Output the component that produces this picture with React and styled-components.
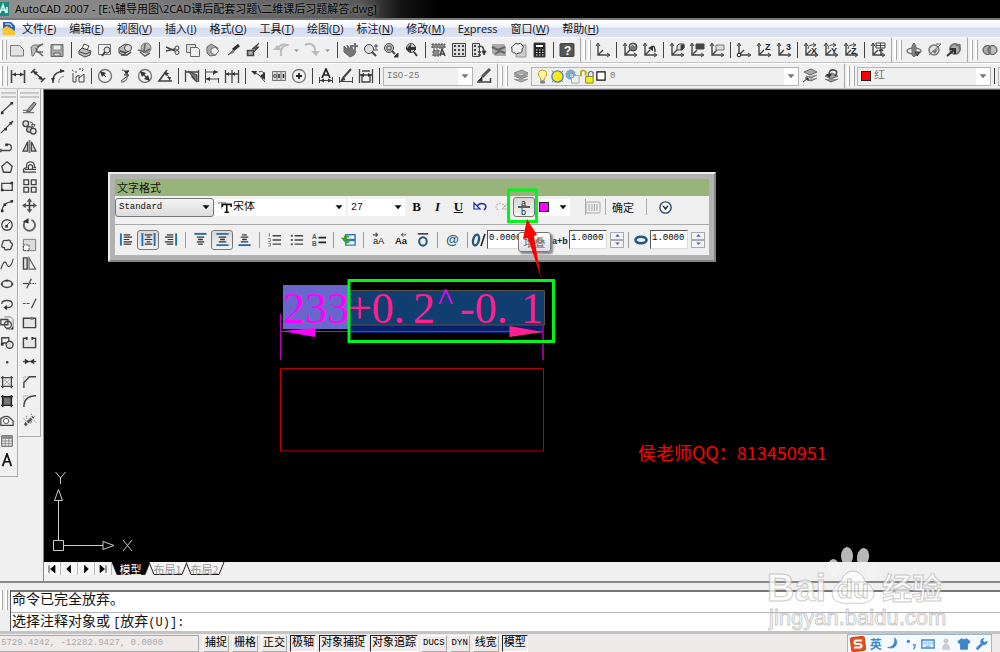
import React from 'react';
import styled, { createGlobalStyle, css } from 'styled-components';

const Global = createGlobalStyle`
  * { box-sizing: border-box; }
  html, body { margin: 0; padding: 0; }
  body { background: #f0f0f0; overflow: hidden; font-family: "Open Sans", "Noto Sans CJK SC", sans-serif; }
  button, input, select { font: inherit; color: inherit; margin: 0; }
  svg { display: block; flex: none; }
`;

const mono = '"Liberation Mono", "Noto Sans CJK SC", monospace';
const cjk = '"Noto Sans CJK SC", sans-serif';

/* ---------- icon drawings on a 16 unit grid ---------- */

const axes = <><path d="M3 2v11h11M3 13l5-5" strokeWidth="1.4" /><path d="M1 4l2-3 2 3M12 11l3 2-3 2" /></>;
const ink = { fill: '#333', stroke: 'none' };
const glyph = { fill: '#222', stroke: 'none', fontFamily: 'Liberation Sans, sans-serif', fontWeight: 700 };

const drawings = {
  newFile: <path d="M1.500 3.500h9l4 4v6.500h-13z" fill="#e2e2e2" stroke="#777" />,
  open: <><path d="M2 5l3-2h6l-2 3-5 8H3z" fill="#bbb" stroke="#777" /><path d="M8 5l6-3M8 9l6 5M7 6l1 4 6 0" strokeWidth="1.600" stroke="#666" /></>,
  save: <><path d="M2 2.500h12v12H2z" fill="#aaa" stroke="#666" /><path d="M4 3h8v5H4z" fill="#eee" stroke="#888" /><path d="M5 11h6v3H5z" fill="#ddd" stroke="#666" /></>,
  print: <><path d="M5 7l2-5 5 2-2 4" fill="#fff" /><path d="M2 9l3-3 9 3-1 4-5 2-6-3z" fill="#bbb" /><path d="M3 10l6 2 4-2" /></>,
  preview: <><path d="M1.500 2.500h12v10h-12z" fill="#eee" stroke="#777" /><circle cx="10" cy="8" r="3" fill="#ddd" /><path d="M8 10l-3 4" strokeWidth="2" /></>,
  publish: <><path d="M2 6l6-4 5 2-1 5-6 4-4-2z" fill="#bbb" /><circle cx="11" cy="6" r="3.500" fill="#ddd" /><path d="M3 9l6 2M4 13h6l4-3" strokeWidth="1.500" /></>,
  dwf: <><circle cx="9" cy="6" r="5" fill="#bbb" stroke="#777" /><path d="M1 8l7 2 5-3M3 10l5 4 5-3M8 2l-1 8" strokeWidth="1.600" stroke="#666" /></>,
  cut: <><path d="M1 5l9 4M1 9l9-2" strokeWidth="1.400" /><circle cx="12" cy="6" r="2" /><circle cx="12" cy="10.500" r="2" /></>,
  copy: <><path d="M1.500 2.500h9v8h-9z" fill="#ddd" stroke="#666" /><path d="M5.500 5.500h7l2 2v7h-9z" fill="#eee" stroke="#666" /></>,
  paste: <><path d="M2 5l4-3 7 4-2 7-6 1-3-3z" fill="#aaa" stroke="#666" /><path d="M6 7l4-2 4 4-4 4-4-2z" fill="#eee" stroke="#777" /></>,
  match: <><path d="M14 3L8 8" strokeWidth="3" stroke="#333" /><path d="M8 8l-5 5 6-3z" fill="#777" stroke="#777" /></>,
  blockEdit: <><path d="M2.500 8.500h6v5h-6z" fill="#aaa" strokeWidth="1.500" /><path d="M14 1L7 7h4l-3 4 6-6h-3z" fill="#555" /></>,
  undo: <><path d="M5 7c2-5 6-5 9-4-5 1-7 4-6 11" strokeWidth="2" stroke="#bbb" /><path d="M0 8h9L4 3z" fill="#bbb" stroke="none" /></>,
  redo: <><path d="M1 3c6-3 10 0 10 6" strokeWidth="2" stroke="#bbb" /><path d="M7 9h9l-4 5z" fill="#bbb" stroke="none" /></>,
  pan: <><path d="M1 4l4 4-1-5 3 4 1-4 2 5 3 1-2 4-4 2-6-5z" fill="#777" stroke="#666" /><path d="M12 1v7M9 4h6" stroke="#777" strokeWidth="2" /></>,
  zoomRt: <><circle cx="6" cy="7" r="4.500" fill="#ddd" /><path d="M9 10l4 4" strokeWidth="2" /><path d="M13 2v5M11 4h4M11 8h4" /></>,
  zoomWin: <><circle cx="6" cy="6" r="4.500" fill="#ccc" /><path d="M4 4h4v4H4z" /><path d="M9 9l3 3" strokeWidth="2" /><path d="M15 11v4h-4z" fill="#222" /></>,
  zoomPrev: <><circle cx="8" cy="6" r="4.500" fill="#ccc" /><path d="M11 10l3 4" strokeWidth="2" /><path d="M3 7l5-5v3h5v3H8v3z" fill="#333" stroke="none" /></>,
  props: <><path d="M1 2h13v4H1zM2 8h6v6H2z" fill="#888" stroke="#555" strokeDasharray="2 1" /><path d="M9 14l2-7 3 7M10 12h4" strokeWidth="1.500" /></>,
  center: <><path d="M1.500 1.500h13v13h-13z" fill="#ddd" /><path d="M4 3v10M8 3v10M12 3v10" stroke="#444" strokeWidth="2" strokeDasharray="2 2" /></>,
  palettes: <><path d="M1.500 1.500h7v13h-7z" fill="#ddd" /><path d="M4 3v10" strokeWidth="2" strokeDasharray="2 2" /><path d="M7 5c4-2 6 0 6 6M7 10h3M7 13h3" strokeWidth="1.500" /><path d="M11 9h4l-2 4z" fill="#222" /></>,
  sheet: <><path d="M1 2h12l2 3v9H4L1 11z" fill="#aaa" stroke="none" /><path d="M1 5l6 3 7-3M4 12l5-3 5 2" stroke="#666" strokeWidth="2" /></>,
  markup: <><path d="M11 3h4v12H5v-3" fill="#ccc" stroke="#999" /><path d="M3 3q2-3 4-1 3-2 4 1 3 2 0 4 1 4-3 4-3 2-4 0-4 0-3-4-2-2 2-4z" fill="#eee" /></>,
  calc: <><path d="M3 1h11v14H3z" fill="#222" /><path d="M5 3h7v2H5z" fill="#fff" stroke="none" /><path d="M5 8h8M5 10.500h8M5 13h8" stroke="#eee" strokeDasharray="1.500 1.500" /></>,
  help: <><rect x="1" y="1.500" width="14" height="13" rx="1" fill="#555" /><text x="5" y="13" fontSize="12" {...glyph} fill="#fff">?</text></>,
  ucs: axes,
  ucsWorld: <>{axes}<circle cx="11" cy="5" r="4" fill="#777" /><path d="M8 4q3-3 5 0" stroke="#ddd" /></>,
  ucsPrev: <>{axes}<path d="M8 6q5-5 5 4" strokeWidth="1.600" /><path d="M6 6l5 3V4z" {...ink} /></>,
  ucsFace: <>{axes}<path d="M8 4l2-2h5v4l-2 2H8z" fill="#ddd" /><path d="M12 3h3v3l-3 2z" fill="#333" /></>,
  ucsObject: <>{axes}<path d="M7 2h8v5H7z" fill="#444" /></>,
  ucsView: <>{axes}<path d="M7 3h8v5H7z" fill="#ddd" stroke="#777" /></>,
  ucsOrigin: <>{axes}<circle cx="3" cy="13" r="1.800" fill="#fff" stroke="#111" /></>,
  ucsZ: <>{axes}<text x="9" y="8" fontSize="9" {...glyph}>Z</text></>,
  ucs3: <>{axes}<text x="10" y="8" fontSize="9" {...glyph}>3</text></>,
  rotX: <>{axes}<path d="M5 7q0-5 7-4M10 1l3 2-3 2" /><text x="8" y="12" fontSize="9" {...glyph}>X</text></>,
  rotY: <>{axes}<path d="M5 7q0-5 7-4M10 1l3 2-3 2" /><text x="8" y="12" fontSize="9" {...glyph}>Y</text></>,
  rotZ: <>{axes}<path d="M5 7q0-5 7-4M10 1l3 2-3 2" /><text x="8" y="12" fontSize="9" {...glyph}>Z</text></>,
  ucsApply: <>{axes}<path d="M6 1h9v5H6zM6 3.500h9M10.500 1v5" /><path d="M11 7v7M9 9l2-2 2 2" strokeWidth="1.500" /></>,
  orbit: <><ellipse cx="8" cy="9" rx="7" ry="3" stroke="#777" strokeWidth="1.500" /><path d="M8 1v13M6 4l2-3 2 3v9l-2 2-2-2z" fill="#999" stroke="#666" /><path d="M9 10h5l-3 4z" fill="#555" /></>,
  freeOrbit: <><circle cx="8" cy="8" r="5" stroke="#777" strokeWidth="1.500" fill="#ddd" /><path d="M3 13l10-9 2-2-5 0" stroke="#666" /><path d="M6 9l6-2-3 5z" fill="#777" stroke="none" /></>,
  contOrbit: <><circle cx="9" cy="7" r="5" fill="#aaa" stroke="#777" strokeWidth="2" /><path d="M1 14l7-6M4 7h5v5" stroke="#333" strokeWidth="2" /><path d="M10 4l4-2v5" stroke="#666" /></>,
  union: <><circle cx="5.500" cy="8" r="4.500" fill="#aaa" /><circle cx="10.500" cy="8" r="4.500" fill="#bbb" /><path d="M8 4.500v7" /></>,
  dimLinear: <><path d="M1.500 2v13M14.500 2v13" strokeWidth="1.600" /><path d="M2 6.500h12" /><path d="M2 6.500l4-2v4zM14 6.500l-4-2v4z" {...ink} /></>,
  dimAligned: <><path d="M1 5l4-4M11 14l4-4M3 3l10 9" strokeWidth="1.600" /><path d="M3 3l5 1-3 3zM13 12l-5-1 3-3z" {...ink} /></>,
  dimArc: <><path d="M3 15Q2 4 14 3" strokeWidth="1.600" /><path d="M9 15q-1-5 5-7" stroke="#888" /><path d="M10 1l5 2-5 2zM1 10l4 0-2 4z" {...ink} /></>,
  dimOrd: <><path d="M3 5v9h3V9l3-2v7h5V6l-5 4" /><path d="M2 2l2 2M9 1h4M12 3l2-2M6 3v3" strokeDasharray="2 1" /></>,
  dimRadius: <><circle cx="8" cy="8" r="6.500" stroke="#777" strokeWidth="1.400" /><path d="M5 5l4 4" /><path d="M3 3l6 2-4 4z" {...ink} /></>,
  dimJog: <><path d="M5 2a6 6 0 1 1-1 12" stroke="#888" strokeWidth="1.400" /><path d="M12 3L7 7h5l-8 6" /><path d="M12 2l-5 1 3 4z" {...ink} /></>,
  dimDia: <><circle cx="8" cy="8" r="6.500" stroke="#777" strokeWidth="1.400" /><path d="M4 4l8 8" strokeWidth="1.500" /><path d="M3 3l6 2-4 4zM13 13l-6-2 4-4z" {...ink} /></>,
  dimAng: <><path d="M10 2L2 13h13" strokeWidth="1.600" /><path d="M8 5q5 3 5 8" /><path d="M7 4l5 1-3 3zM13 12l-3-3h4z" {...ink} /></>,
  dimQuick: <><path d="M1.500 2v12M14.500 2v12M2 4h12M8 4v5l5 5" strokeWidth="1.300" /><path d="M4 3l9 11V7z" fill="#777" /></>,
  dimBase: <><path d="M1.500 1v14M9.500 3v4M14.500 10v5M2 4h12M2 11h12" /><path d="M14 4l-4-2v4zM2 11l4-2v4z" {...ink} /></>,
  dimCont: <><path d="M1.500 2v13M8 2v13M14.500 2v13M2 6h12" strokeWidth="1.300" /><path d="M2 6l3-2v4zM8 6l3-2v4z" {...ink} /></>,
  leader: <><path d="M1 3l7 4 6 7M8 4q3-2 5 1t-2 6" /><path d="M0 3l6 0-2 4zM9 8l5-4v8z" {...ink} /></>,
  tolerance: <><path d="M1.500 3.500h13v9h-13zM6 4v8M10 4v8" fill="#ddd" stroke="#777" /><circle cx="4" cy="8" r="1.500" /><path d="M8 6v4M12.500 6v4" stroke="#222" strokeWidth="1.500" /></>,
  centerMark: <><circle cx="8" cy="8" r="6.500" stroke="#777" strokeWidth="1.300" /><path d="M8 5v6M5 8h6" stroke="#222" strokeWidth="1.800" /></>,
  dimEdit: <><path d="M4 10l4-9 4 9M5.500 7h5" strokeWidth="1.700" stroke="#222" /><path d="M1.500 9v6M14.500 9v6M2 12.500h12" /><path d="M2 12.500l4-2v4zM14 12.500l-4-2v4z" {...ink} /></>,
  dimTextEdit: <><path d="M5 10l8-9M5 10l-1 2 3-1" strokeWidth="2" /><path d="M1.500 9v6M14.500 9v6M2 13.500h12" /></>,
  dimUpdate: <><path d="M1.500 1v14M14.500 1v14M4 3h8M2 7h12M4 8v6h8V8" strokeWidth="1.300" /><path d="M2 7l4-2v4zM14 7l-4-2v4z" {...ink} /></>,
  dimStyle: <><path d="M14 1L6 9" strokeWidth="3" stroke="#555" /><path d="M6 9l-4 4h4z" fill="#222" /><path d="M1 14h14M14.500 10v5" strokeWidth="1.500" /></>,
  layers: <path d="M1 5l8-3 6 3-7 3zM1 8l7 3 7-3M1 11l7 3 7-3M1 6.500l7 3 7-3" fill="#aaa" stroke="#888" />,
  layerPrev: <><path d="M2 4l7-3 6 3-7 3zM4 8l5 2 6-3M4 11l5 2 6-3" fill="#aaa" stroke="#666" /><path d="M1 14l5-4M3 10h3v3" stroke="#222" /></>,
  layerState: <><path d="M2 8l7-3 6 3-7 3zM2 11l6 3 7-3" fill="#999" stroke="#666" /><path d="M6 7q0-6 5-5t1 6" strokeWidth="1.600" /><path d="M3 6h6l-3 4z" {...ink} /></>,
  bulb: <><path d="M8 1a4.500 4.500 0 0 0-2 8.500V12h4V9.500A4.500 4.500 0 0 0 8 1z" fill="#fff6a0" stroke="#b09a20" /><path d="M6 13h4v2H6z" fill="#77a" stroke="#77a" /></>,
  sun: <><path d="M2 2l12 12M14 2L2 14" stroke="#48a" /><circle cx="8" cy="8" r="6" fill="#ffe818" stroke="#48a" strokeWidth="1.400" /></>,
  sunVp: <><circle cx="6" cy="6" r="5" fill="#8ac" stroke="#59b" strokeDasharray="2 1" /><path d="M7 7h8v8H7z" fill="#eee" stroke="#9ab" /><circle cx="7" cy="7" r="2.500" fill="#bcd" stroke="#69b" /></>,
  lock: <><path d="M1 8V3q2-3 5 0v4" strokeWidth="2" stroke="#b8b010" /><path d="M6 8h8v7H6z" fill="#f4f020" stroke="#8a8410" /><path d="M9 8V4q3-3 5 0v4" stroke="#777" strokeWidth="1.500" /></>,
  square: <path d="M2.500 2.500h11v11h-11z" fill="#fff" stroke="#111" strokeWidth="1.600" />,
  line: <><path d="M2 13L14 2" strokeWidth="1.500" /><path d="M1 12h3v3H1zM12 1h3v3h-3z" {...ink} /></>,
  xline: <><path d="M1 15L15 1" strokeWidth="1.500" /><path d="M15 1l-5 2 3 3zM5 9h3v3H5z" {...ink} /></>,
  pline: <><path d="M1 12h10a4 4 0 0 0 0-7H8M1 10v4" strokeWidth="1.500" /><path d="M6 4h3v3H6z" {...ink} /></>,
  polygon: <path d="M8 2l6 5-2 7H4L2 7z" fill="#eee" strokeWidth="1.500" />,
  rect: <><path d="M2 5h12v8H2z" fill="#eee" strokeWidth="1.500" /><path d="M12 3h3v3h-3zM1 11h3v3H1z" {...ink} /></>,
  arc: <><path d="M2 14Q3 4 14 3" strokeWidth="1.500" /><path d="M1 12h3v3H1zM4 5h3v3H4zM12 1h3v3h-3z" {...ink} /></>,
  circle: <><circle cx="8" cy="8" r="6" fill="#eee" strokeWidth="1.500" /><path d="M7 9l5-5" /><path d="M6 8h3v3H6z" {...ink} /></>,
  cloud: <path d="M3 6q0-4 4-3 5-2 5 2 4 2 1 5 0 4-4 3-4 2-4-2-5 0-2-5z" fill="#eee" strokeWidth="1.500" />,
  spline: <path d="M1 14C5 1 7 6 8 9s5 3 7-7" strokeWidth="1.300" />,
  ellipse: <><ellipse cx="8" cy="8" rx="6" ry="4" fill="#eee" strokeWidth="1.700" /><path d="M7 3h2v2H7zM1 7h2v2H1zM13 7h2v2h-2z" {...ink} /></>,
  ellipseArc: <><path d="M2 8q0-4 6-4t6 4-6 4" strokeWidth="1.500" /><path d="M8 9v6l-4-3z" {...ink} /></>,
  insert: <><path d="M5 1h7l3 3v11H7" fill="#eee" stroke="#777" /><path d="M1 4h8v6H1z" strokeWidth="1.500" /><circle cx="9" cy="10" r="4" strokeWidth="1.500" /><path d="M15 12v3h-3z" {...ink} /></>,
  block: <><path d="M2 2h8v6H2z" strokeWidth="1.500" /><circle cx="11" cy="10" r="4" strokeWidth="1.500" fill="#ddd" /><path d="M1 8h3v3H1z" {...ink} /></>,
  point: <path d="M7 7h2.500v2.500H7z" {...ink} />,
  hatch: <><path d="M3 1v14M13 1v14M1 3h14M1 13h14" strokeWidth="1.500" /><path d="M4 8l4-4M4 12l8-8M8 12l4-4M4 4l8 8" stroke="#aaa" /></>,
  gradient: <><path d="M4 4h9v9H4z" fill="#777" /><path d="M3 1v14M13 1v14M1 3h14M1 13h14" strokeWidth="1.700" stroke="#222" /></>,
  region: <><path d="M1 13V5q6-4 10-1l4 4v5z" fill="#eee" strokeWidth="1.400" /><circle cx="7" cy="8" r="3" fill="#fff" /></>,
  table: <><path d="M2 2h12v12H2z" fill="#eee" /><path d="M2 4h12" strokeWidth="3" stroke="#888" /><path d="M2 8h12M2 11h12M6 4v10M10 4v10" stroke="#888" /></>,
  textA: <path d="M3 15L8 1l5 14M5 10h6" strokeWidth="1.900" stroke="#111" />,
  erase: <><path d="M6 10l7-8 2 2-6 8-4 1z" fill="#999" /><path d="M1 11h5M1 13.500h12" strokeWidth="1.400" stroke="#777" /></>,
  copyObj: <><circle cx="4" cy="4" r="3" fill="#ddd" strokeWidth="1.400" /><circle cx="8" cy="10" r="3" fill="#ccc" strokeWidth="1.400" /><circle cx="12" cy="12" r="3" fill="#eee" strokeWidth="1.400" /><path d="M8 2q4 0 4 3M10 5h4l-2 3z" /></>,
  mirror: <><path d="M6 3v10H1zM10 3v10h5z" fill="#ccc" strokeWidth="1.300" /><path d="M8 1v14" stroke="#777" strokeWidth="2" /></>,
  offset: <path d="M1 14h14M3 11h12M3 14q-4-3 2-5-1-6 4-6t4 6h2M7 11q-1-5 2-5t2 5" strokeWidth="1.300" />,
  array: <path d="M2 2h5v5H2zM10 2h5v5h-5zM2 10h5v5H2zM10 10h5v5h-5z" fill="#eee" strokeWidth="1.400" />,
  move: <><path d="M8 2v12M2 8h12" strokeWidth="1.800" /><path d="M8 0l3 4H5zM8 16l3-4H5zM0 8l4-3v6zM16 8l-4-3v6z" fill="#555" stroke="none" /></>,
  rotate: <><path d="M10 3a6 6 0 1 1-6 1" strokeWidth="2" stroke="#666" /><path d="M1 5l6-4v6z" {...ink} /></>,
  scale: <><path d="M1.500 2.500h13v12h-13z" fill="#ddd" stroke="#777" /><path d="M1.500 8.500h6v6h-6z" fill="#fff" stroke="#333" strokeDasharray="2 1" /></>,
  stretch: <><path d="M1.500 2h4v12h-4z" strokeWidth="1.400" fill="#ddd" /><path d="M7.500 2v12h7z" stroke="#666" strokeWidth="1.300" /></>,
  trim: <><path d="M1 8h6" strokeWidth="1.300" /><path d="M8 8h7" strokeDasharray="2 1" /><path d="M5 13l5-10" strokeWidth="1.300" /></>,
  extend: <><path d="M1 8h8" strokeDasharray="3 1" /><path d="M10 13l5-10" strokeWidth="1.300" /></>,
  breakPt: <><path d="M1.500 3.500h13v10h-13z" fill="#e6e6e6" strokeWidth="1.500" /><path d="M9 2h3v3H9z" fill="#777" stroke="none" /></>,
  breakObj: <><path d="M5 3.500H1.500v10h13v-10H11" fill="#e6e6e6" strokeWidth="1.500" /><path d="M4 2h2v3H4zM10 2h2v3h-2z" {...ink} /></>,
  join: <><path d="M1 8h14" strokeWidth="1.300" /><path d="M8 8L3 5v6zM8 8l5-3v6z" {...ink} /></>,
  chamfer: <><path d="M2 15V9l6-6h7" strokeWidth="1.500" /><path d="M2 8V3h5" stroke="#777" strokeDasharray="1 1" /></>,
  fillet: <><path d="M2 15Q2 3 15 3" strokeWidth="1.600" /><path d="M2 8V3h5" stroke="#777" strokeDasharray="1 1" /></>,
  explode: <><path d="M3 13l4-4 3 1M8 8l4-4" strokeWidth="3" stroke="#555" strokeDasharray="3 1" /><path d="M2 6l2 2M10 1v2M14 3l-2 2M13 8l2 2M5 3v3M3 10h2" strokeDasharray="1 1" /></>,
};

const blue = '#286ea6';
Object.assign(drawings, {
  alLeft: <><path d="M2 1.500v13" stroke={blue} strokeWidth="2" /><path d="M5 3h7M5 5.500h9M5 8h6M5 10.500h9M5 13h8" stroke="#333" strokeWidth="1.300" /></>,
  alCenter: <><path d="M1.500 1v14M14.500 1v14" stroke={blue} strokeWidth="2" /><path d="M4 3h8M6 5.500h4M4 8h8M6 10.500h4M4 13h8" stroke="#333" strokeWidth="1.300" /></>,
  alRight: <><path d="M14 1.500v13" stroke={blue} strokeWidth="2" /><path d="M4 3h7M2 5.500h9M5 8h6M2 10.500h9M4 13h7" stroke="#333" strokeWidth="1.300" /></>,
  top: <><path d="M1.500 2h13" stroke={blue} strokeWidth="2" /><path d="M4 5.500h8M5.500 8h5M4 10.500h8M5.500 13h5" stroke="#333" strokeWidth="1.400" /></>,
  middle: <><path d="M1.500 2h13M1.500 14h13" stroke={blue} strokeWidth="2" /><path d="M4 5.500h8M5.500 8h5M4 10.500h8" stroke="#333" strokeWidth="1.400" /></>,
  bottom: <><path d="M1.500 14h13" stroke={blue} strokeWidth="2" /><path d="M5.500 3h5M4 5.500h8M5.500 8h5M4 10.500h8" stroke="#333" strokeWidth="1.400" /></>,
  numbered: <><path d="M6 4h9M6 8.500h9M6 13h9" strokeWidth="1.400" /><path d="M2.500 1v4M1.500 7h2v3h-2M1.500 12h2v3h-2" stroke="#777" /></>,
  bullets: <><path d="M6 4h9M6 8.500h9M6 13h9" strokeWidth="1.400" /><path d="M2 3h2v2H2zM2 7.500h2v2H2zM2 12h2v2H2z" fill="#555" stroke="none" /></>,
  letters: <><path d="M8 6h8M8 11h8" strokeWidth="1.800" stroke="#222" /><text x="1" y="7" fontSize="7" {...glyph} fill="#555">A</text><text x="1" y="15" fontSize="7" {...glyph} fill="#555">B</text></>,
  field: <><path d="M5 3h10v5H5zM5 9h10v5H5z" fill="#fff" stroke="#2878b8" strokeWidth="1.500" /><path d="M9 5H4v4M5 11h3V8" stroke="#38a028" strokeWidth="1.800" /><path d="M0 6h7l-3 5z" fill="#38a028" stroke="none" /></>,
  upper: <><text x="2" y="13" fontSize="10" {...glyph} fontWeight="400">aA</text><path d="M2 3h5M5 1l2 2-2 2" strokeWidth="1.200" /></>,
  lower: <><text x="2" y="13" fontSize="10" {...glyph}>Aa</text><path d="M9 3h5M11 1L9 3l2 2" strokeWidth="1" /></>,
  overline: <><path d="M3 2h11" strokeWidth="1.600" stroke="#333" /><ellipse cx="8.500" cy="10" rx="4" ry="4.500" stroke="#24587a" strokeWidth="2.200" /></>,
  at: <text x="1" y="13" fontSize="14" {...glyph} fill="#24587a">@</text>,
  oblique: <><ellipse cx="5" cy="8" rx="2.800" ry="5.500" stroke="#24587a" strokeWidth="2.400" transform="rotate(14 5 8)" /><path d="M14 2l-4 12" strokeWidth="1.600" stroke="#222" /></>,
  tracking: <text x="0" y="12" fontSize="9" {...glyph}>a+b</text>,
  widthF: <ellipse cx="8" cy="8" rx="5.500" ry="3.200" stroke="#24587a" strokeWidth="2.600" />,
  ruler: <><rect x="1" y="3" width="14" height="11" rx="1" stroke="#aaa" fill="#eee" /><path d="M4 5v7M7 5v7M9.500 5v7M12 5v7" stroke="#aaa" /></>,
  undoBlue: <><path d="M4 8q4-5 8-3t0 6" stroke="#1c28a0" strokeWidth="1.500" /><path d="M2 4v6h6z" fill="#fff" stroke="#1c28a0" strokeWidth="1.200" /></>,
  redoGray: <><path d="M12 8Q8 3 4 5t0 6" stroke="#bbb" strokeWidth="1.300" strokeDasharray="2 1" /><path d="M14 4v6H8z" stroke="#bbb" /></>,
  options: <><circle cx="8" cy="8" r="6" stroke="#24487a" strokeWidth="1.500" fill="#fff" /><path d="M4.500 6h7L8 11z" fill="#222" stroke="none" /><path d="M6 6h4l-2 2z" fill="#fff" stroke="none" /></>,
  ttf: <><path d="M1 3h8M1 2v3M9 2v2M4 3v7" stroke="#888" /><path d="M5 5h10M5 4v4M15 4v4M10 5v9M7.500 14h5" stroke="#111" strokeWidth="1.800" /></>,
  fraction: <><path d="M2 8h12" stroke="#111" strokeWidth="1.300" /><text x="5" y="6.500" fontSize="9" {...glyph} fontWeight="400">a</text><text x="5" y="16" fontSize="9" {...glyph} fontWeight="400">b</text></>,
  moon: <path d="M10 1c5 5 1 14-8 11 5 0 9-4 8-11z" fill="#3f86cf" stroke="#3f86cf" />,
  comma: <><circle cx="5" cy="5" r="1.800" fill="#3f86cf" stroke="none" /><path d="M10 9h2.500v2l-1.500 3" stroke="#3f86cf" strokeWidth="1.600" /></>,
  keyboard: <><path d="M1 3.500h14v9H1z" fill="#fff" stroke="#3f86cf" strokeWidth="1.600" /><path d="M3 6h11M3 8h11" stroke="#3f86cf" strokeDasharray="1.500 1" /><path d="M5 10.500h6" stroke="#3f86cf" /></>,
  person: <path d="M8 2a2.500 2.500 0 1 1 0 5 2.500 2.500 0 1 1 0-5zM4 14q0-6 4-6t4 6z" fill="#ccc" stroke="#ccc" />,
  shirt: <path d="M5 2q3 2 6 0l4 3-2 3-1-1v7H4V7L3 8 1 5z" fill="#3f86cf" stroke="#3f86cf" />,
  wrench: <><path d="M2 14l6-6" stroke="#3f86cf" strokeWidth="3" /><path d="M14 4l-3 2-2-2 2-3q-5 0-5 5 2 4 5 3 4-1 3-5z" fill="#3f86cf" stroke="none" /></>,
  sogou: <><rect x="1" y="1" width="14" height="14" rx="2" fill="#e8501c" stroke="#c83c10" transform="rotate(-6 8 8)" /><path d="M12 4.500H6q-3 2 0 3.500h4q3 2 0 3.500H4" stroke="#fff" strokeWidth="2.200" /></>,
  caret: <path d="M4 6h8l-4 4.500z" fill="currentColor" stroke="none" />,
  first: <path d="M4 3v10M12 3L6 8l6 5z" fill="#000" stroke="#000" />,
  prev: <path d="M10 3L5 8l5 5z" fill="#000" stroke="#000" />,
  next: <path d="M6 3l5 5-5 5z" fill="#000" stroke="#000" />,
  last: <path d="M12 3v10M4 3l6 5-6 5z" fill="#000" stroke="#000" />,
});

const Icon = ({ name, size = 16 }) => (
  <svg width={size} height={size} viewBox="0 0 16 16" fill="none" stroke="#444" strokeWidth="1" aria-hidden="true">{drawings[name]}</svg>
);

/* ---------- frame ---------- */

const Shell = styled.div`
  height: 100vh;
  display: flex;
  flex-direction: column;
  overflow: hidden;
  position: relative;
`;
const TitleBar = styled.header`
  display: flex;
  align-items: center;
  gap: 5px;
  height: 18px;
  flex: none;
  overflow: hidden;
  background: linear-gradient(90deg, #8f8f8f 0, #858585 110px, #6a6a6a 230px, #585858 360px, #141414 400px, #000 440px);
`;
const TitleText = styled.h1`
  margin: 0;
  font: 400 11px/18px "Open Sans", ${cjk};
  color: #000;
  white-space: nowrap;
  text-shadow: 0 0 4px #aaa;
`;
const MenuBar = styled.nav`
  display: flex;
  align-items: center;
  gap: 13px;
  height: 19px;
  flex: none;
  border-top: 2px solid #777;
  background: linear-gradient(#fff 0, #f2f4fb 40%, #d5dcf0 50%, #dde3f4 100%);
`;
const MenuItem = styled.button`
  border: 0;
  padding: 0;
  background: none;
  font-size: 11px;
  line-height: 17px;
  color: #111;
  white-space: nowrap;
`;
const MenuIcon = styled.span`
  width: 9px;
  padding-left: 2px;
`;
const ToolbarLine = styled.div`
  display: flex;
  height: 26px;
  flex: none;
  background: #f0f0f0;
  border-bottom: 1px solid #c4c4c4;
  overflow: hidden;
`;
const Bar = styled.div`
  display: flex;
  align-items: center;
  flex: none;
  padding-right: 3px;
  border-right: 1px solid #a8a8a8;
  border-top: 1px solid #fff;
`;
const Grip = styled.span`
  flex: none;
  width: ${p => p.$w || 12}px;
  height: 20px;
  display: flex;
  justify-content: ${p => (p.$start ? 'flex-start' : 'center')};
  gap: 2px;
  &::before, &::after {
    content: "";
    width: 2px;
    background: #fff;
    border-right: 1px solid #aaa;
  }
`;
const Tool = styled.button`
  display: flex;
  align-items: center;
  justify-content: center;
  flex: none;
  width: ${p => p.$w || 20}px;
  height: 20px;
  padding: 0;
  border: 0;
  background: none;
  color: #888;
`;
const Sep = styled.span`
  flex: none;
  width: ${p => p.$w || 7}px;
  margin-left: ${p => p.$before || 0}px;
  height: 16px;
  display: flex;
  justify-content: center;
  &::before { content: ""; width: 1px; background: ${p => p.$c || '#444'}; }
`;
const Combo = styled.label`
  display: flex;
  align-items: center;
  position: relative;
  flex: none;
  width: ${p => p.$w}px;
  height: 19px;
  padding: 0 3px;
  color: ${p => p.$c || '#777'};
  background: ${p => p.$bg || '#f0f0f0'};
  border: 1px solid ${p => p.$line || '#b4b4b4'};
  border-radius: ${p => p.$r || 0}px;
  > select {
    appearance: none;
    flex: 1;
    min-width: 0;
    border: 0;
    outline: 0;
    padding: 0 0 0 ${p => p.$pad || 0}px;
    background: none;
    font: ${p => p.$fs || 9}px ${mono};
  }
`;
const ComboArrow = styled.span`
  display: flex;
  align-items: center;
  align-self: stretch;
  margin-right: -3px;
  background: ${p => p.$bg || 'transparent'};
`;
const Swatch = styled.span`
  flex: none;
  width: 10px;
  height: 10px;
  border: 1px solid #222;
  background: ${p => p.$c};
`;

const Select = ({ label, value, arrowBg, children, ...rest }) => (
  <Combo {...rest}>
    {children}
    <select aria-label={label} defaultValue={value}><option>{value}</option></select>
    <ComboArrow $bg={arrowBg}><Icon name="caret" size={14} /></ComboArrow>
  </Combo>
);

const Tools = ({ list, sep = 7, w }) => list.map((n, i) => (
  n === '|' ? <Sep key={i} $w={sep} /> : n === 'v'
    ? <Tool key={i} $w={11} aria-label="more"><Icon name="caret" size={9} /></Tool>
    : <Tool key={i} $w={w} aria-label={n}><Icon name={n} /></Tool>
));

/* ---------- workspace ---------- */

const Workspace = styled.main`
  display: flex;
  flex: 1;
  min-height: 0;
`;
const Palettes = styled.aside`
  display: flex;
  align-items: flex-start;
  width: 44px;
  flex: none;
  background: #f0f0f0;
  border-right: 1px solid #888;
`;
const Palette = styled.div`
  display: flex;
  flex-direction: column;
  align-items: ${p => (p.$clip ? 'flex-start' : 'center')};
  width: ${p => (p.$clip ? 18 : 23)}px;
  height: ${p => p.$h}px;
  padding: 3px 0 6px;
  border-right: 1px solid #aaa;
  border-bottom: 1px solid #aaa;
  border-left: ${p => (p.$clip ? 0 : 1)}px solid #fff;
  overflow: hidden;
`;
const PaletteGrip = styled.span`
  align-self: stretch;
  height: 6px;
  margin: 0 1px;
  border-top: 2px solid #c8c8c8;
  border-bottom: 2px solid #c8c8c8;
`;
const PaletteTools = styled.div`
  flex: 1;
  min-height: 0;
  display: grid;
  grid-auto-rows: 1fr;
  width: ${p => (p.$clip ? 13 : 19)}px;
  button { width: 100%; height: auto; }
`;
const Drawing = styled.section`
  flex: 1;
  min-width: 0;
  display: flex;
  flex-direction: column;
`;
const Canvas = styled.div`
  position: relative;
  flex: 1;
  background: #000;
  border-top: 1px solid #666;
  overflow: hidden;
`;
const Layer = styled.svg`
  position: absolute;
  top: 0;
  left: 0;
  width: 100%;
  height: 100%;
  pointer-events: none;
`;
const UcsIcon = styled.svg`
  position: absolute;
  left: 4px;
  bottom: 6px;
`;
const Dialog = styled.div`
  position: absolute;
  left: 64px;
  top: 82px;
  width: 608px;
  height: 90px;
  padding: 5px;
  background: #b2b2b2;
  border: 2px solid #858585;
  border-top-color: #ececec;
  border-left-color: #ececec;
`;
const DialogBody = styled.div`
  height: 100%;
  display: flex;
  flex-direction: column;
  background: #f0f0f0;
  font-family: ${cjk};
`;
const DialogTitle = styled.h2`
  margin: 0;
  height: 17px;
  padding-left: 2px;
  background: #99b47b;
  font: 400 11px/17px ${cjk};
  color: #111;
`;
const DialogRow = styled.div`
  display: flex;
  align-items: center;
  height: 29px;
  border-bottom: ${p => (p.$rule ? 1 : 0)}px solid #aaa;
  padding-bottom: ${p => (p.$rule ? 6 : 0)}px;
`;
const Fmt = styled.button`
  display: flex;
  align-items: center;
  justify-content: center;
  flex: none;
  width: ${p => p.$w || 22}px;
  height: 20px;
  padding: 0;
  border: 1px solid transparent;
  background: none;
  color: #111;
  font: 700 13px "Liberation Serif", serif;
  font-style: ${p => (p.$i ? 'italic' : 'normal')};
  text-decoration: ${p => (p.$u ? 'underline' : 'none')};
  ${p => p.$on && css`
    border: 1px solid #777;
    border-radius: 3px;
    background: linear-gradient(#d8d8d8, #f2f2f2);
  `}
`;
const Ok = styled(Fmt)`
  font: 400 11px ${cjk};
`;
const NumberField = styled.input`
  flex: none;
  width: 38px;
  height: 19px;
  padding: 0 0 3px 1px;
  border: 1px solid #ddd;
  border-top-color: #555;
  border-left-color: #555;
  background: #fff;
  font: 9px/14px ${mono};
`;
const Spin = styled.span`
  flex: none;
  width: 14px;
  margin-left: 3px;
  display: flex;
  flex-direction: column;
`;
const SpinButton = styled.button`
  height: 8px;
  padding: 0;
  border: 1px solid #aaa;
  background: #f4f4f4;
  color: #4a5fc0;
  display: flex;
  align-items: center;
  justify-content: center;
  svg { transform: rotate(${p => (p.$up ? 180 : 0)}deg); }
`;
const Tooltip = styled.div`
  position: absolute;
  left: 474px;
  top: 142px;
  width: 33px;
  height: 20px;
  border: 1px solid #777;
  border-radius: 3px;
  background: linear-gradient(#fff, #dcdfea);
  box-shadow: 2px 2px 2px #888;
  font: 11px/18px ${cjk};
  text-align: center;
  color: #666;
`;

const Number4 = ({ label, value }) => (
  <>
    <NumberField aria-label={label} defaultValue={value} />
    <Spin>
      <SpinButton $up aria-label={`${label} up`}><Icon name="caret" size={9} /></SpinButton>
      <SpinButton aria-label={`${label} down`}><Icon name="caret" size={9} /></SpinButton>
    </Spin>
  </>
);

const TabStrip = styled.div`
  display: flex;
  height: 19px;
  flex: none;
  background: #f0f0f0;
`;
const NavButton = styled.button`
  width: 17px;
  height: 13px;
  padding: 0;
  border: 0;
  border-right: 1px solid #bbb;
  background: #f6f6f6;
  display: flex;
  align-items: center;
  justify-content: center;
`;
const Tab = styled.button`
  position: relative;
  width: 37px;
  height: 13px;
  padding: 0;
  border: 0;
  background: none;
  font: 11px/12px ${cjk};
  color: ${p => (p.$on ? '#fff' : '#999')};
  svg { position: absolute; left: 0; top: 0; }
  span { position: relative; white-space: nowrap; }
`;

/* ---------- command line and status ---------- */

const CommandArea = styled.section`
  display: flex;
  flex: none;
  height: 53px;
  border-top: 2px solid #888;
  border-bottom: 3px solid #c4c4c4;
  padding-top: 7px;
  background: #efefef;
`;
const CommandLines = styled.div`
  flex: 1;
  border-left: 1px solid #555;
  border-top: 2px solid #777;
  background: #fff;
`;
const CommandLine = styled.p`
  margin: 0;
  height: ${p => (p.$last ? 18 : 21)}px;
  padding-left: 1px;
  border-bottom: ${p => (p.$last ? 0 : 1)}px solid #b4b4b4;
  font: 14px/${p => (p.$last ? 14 : 12)}px ${cjk};
  color: #111;
`;
const CommandKey = styled.span`
  font: 12px/12px ${mono};
`;
const StatusBar = styled.footer`
  display: flex;
  align-items: center;
  gap: 3px;
  flex: none;
  height: 18px;
  background: #efebea;
`;
const Coords = styled.output`
  width: 199px;
  height: 17px;
  padding-left: 1px;
  border: 1px solid #aaa;
  border-left: 0;
  font: 9px/14px ${mono};
  color: #aaa;
  margin-right: 1px;
`;
const Toggle = styled.button`
  height: 17px;
  padding: 0 1px;
  border: 1px solid ${p => (p.$on ? '#222' : '#fff')};
  border-right-color: ${p => (p.$on ? '#fff' : '#aaa')};
  border-bottom-color: ${p => (p.$on ? '#fff' : '#aaa')};
  background: none;
  font: ${p => (p.$mono ? 9 : 11)}px/15px ${mono};
  color: #000;
  white-space: nowrap;
`;
const Ime = styled.div`
  display: flex;
  align-items: center;
  justify-content: space-between;
  width: 145px;
  height: 18px;
  margin: 0 8px 0 auto;
  padding: 0 2px;
  background: #f4faff;
  border: 1px solid #9cb8c8;
  border-bottom: 0;
  color: #3f86cf;
  font: 700 12px ${cjk};
`;
const Watermark = styled.div`
  position: absolute;
  right: 48px;
  bottom: 19px;
  width: 188px;
  height: 88px;
  opacity: 0.75;
  pointer-events: none;
`;

const menus = [
  ['文件(', 'F', ')'], ['编辑(', 'E', ')'], ['视图(', 'V', ')'], ['插入(', 'I', ')'], ['格式(', 'O', ')'], ['工具(', 'T', ')'],
  ['绘图(', 'D', ')'], ['标注(', 'N', ')'], ['修改(', 'M', ')'], ['E', 'x', 'press'], ['窗口(', 'W', ')'], ['帮助(', 'H', ')'],
];
const standard = 'newFile open save | print preview publish dwf | cut copy paste match blockEdit | undo v redo v | pan zoomRt zoomWin zoomPrev | props center palettes sheet markup calc | help'.split(' ');
const ucsTools = 'ucs | ucsWorld ucsPrev | ucsFace ucsObject ucsView | ucsOrigin ucsZ ucs3 | rotX rotY rotZ | ucsApply'.split(' ');
const dims = 'dimLinear dimAligned dimArc dimOrd | dimRadius dimJog dimDia dimAng | dimQuick dimBase dimCont | leader tolerance centerMark | dimEdit dimTextEdit dimUpdate |'.split(' ');
const draw = 'line xline pline polygon rect arc circle cloud spline ellipse ellipseArc insert block point hatch gradient region table textA'.split(' ');
const modify = 'erase copyObj mirror offset array move rotate scale stretch trim extend breakPt breakObj join chamfer fillet explode'.split(' ');
const format = 'alLeft alCenter* alRight | top middle* bottom | numbered bullets letters | field | upper lower overline | at |'.split(' ');
const toggles = [['捕捉'], ['栅格'], ['正交'], ['极轴', 1], ['对象捕捉', 1], ['对象追踪', 1], ['DUCS'], ['DYN'], ['线宽'], ['模型', 1]];

const TextFormat = () => (
  <Dialog role="dialog" aria-label="文字格式">
    <DialogBody>
      <DialogTitle>文字格式</DialogTitle>
      <DialogRow $rule>
        <Select label="样式" value="Standard" $w={99} $c="#111" $bg="linear-gradient(#f4f4f4,#ddd)" $line="#777" $r={3} />
        <Select label="字体" value="宋体" $w={133} $c="#111" $bg="#fff" $line="#f0f0f0" $fs={11} $pad={1}><Icon name="ttf" size={14} /></Select>
        <Select label="高度" value="27" $w={59} $c="#111" $bg="#fff" $line="#f0f0f0" $fs={10} />
        <Fmt $w={21}>B</Fmt>
        <Fmt $w={21} $i>I</Fmt>
        <Fmt $w={21} $u>U</Fmt>
        <Fmt aria-label="undo"><Icon name="undoBlue" /></Fmt>
        <Fmt aria-label="redo"><Icon name="redoGray" /></Fmt>
        <Fmt $on aria-label="堆叠"><Icon name="fraction" /></Fmt>
        <Select label="颜色" value="" $w={36} $c="#111" $bg="#fff" $line="#f0f0f0"><Swatch $c="#f0f" /></Select>
        <Sep $before={12} $w={4} $c="#aaa" />
        <Tool $w={12} aria-label="标尺"><Icon name="ruler" /></Tool>
        <Sep $w={12} $c="#aaa" />
        <Ok $w={24}>确定</Ok>
        <Sep $w={22} $c="#aaa" />
        <Fmt $w={16} aria-label="选项"><Icon name="options" size={15} /></Fmt>
      </DialogRow>
      <DialogRow>
        {format.map((n, i) => {
          if (n === '|') return <Sep key={i} $w={8} $c="#999" />;
          const id = n.replace('*', '');
          return <Fmt key={i} $on={n !== id} aria-label={id}><Icon name={id} size={15} /></Fmt>;
        })}
        <Tool $w={16} aria-label="倾斜角度"><Icon name="oblique" /></Tool>
        <Number4 label="倾斜" value="0.0000" />
        <Sep $w={8} $c="#999" />
        <Tool $w={19} aria-label="追踪"><Icon name="tracking" /></Tool>
        <Number4 label="追踪值" value="1.0000" />
        <Sep $w={8} $c="#999" />
        <Tool $w={18} aria-label="宽度因子"><Icon name="widthF" /></Tool>
        <Number4 label="宽度" value="1.0000" />
      </DialogRow>
    </DialogBody>
  </Dialog>
);

const Model = () => (
  <Layer>
    {/* drawing units are offset so that the canvas corner is (44, 90) */}
    <g transform="translate(-44 -90)" fill="none">
      <path d="M283 285h65v44h-65z" fill="#6a67cc" />
      <path d="M348 291h196v34H348z" fill="#103e70" />
      <path d="M348 325h196v8H348z" fill="#081f6c" />
      <path d="M348 290.500h196.500V325H348" stroke="#5c5145" />
      <path d="M280.500 314v46" stroke="#c000c0" />
      <path d="M543 325v35" stroke="#900090" strokeWidth="2" />
      <path d="M281 331.500h262" stroke="#b01898" />
      <path d="M282 331l33-3v9z" fill="#f0f" />
      <path d="M543 332l-33.500-6v11z" fill="#ff2090" />
      <path d="M280.500 368.500h263V451h-263z" stroke="#c00000" />
      <g fontFamily="Liberation Serif, serif" fontSize="44">
        <text x="283" y="323" fill="#f0f">233</text>
        <text y="323" fill="#ff2090"><tspan x="347">+0.</tspan><tspan x="413">2</tspan><tspan x="438" y="310" fontSize="32" fill="#f0f">^</tspan><tspan x="460" y="323">-0.</tspan><tspan x="521">1</tspan></text>
      </g>
      <text x="638" y="460" fill="#f00" fontSize="18" fontFamily="Noto Sans CJK SC, sans-serif">侯老师QQ：813450951</text>
    </g>
  </Layer>
);

export default function App() {
  return (
    <Shell>
      <Global />
      <TitleBar>
        <svg width="10" height="16" viewBox="0 0 10 16"><path d="M0 1h9v14H0z" fill="#1f8a80" /><path d="M0 12l3-8 3 8M2 9h4M7 6v6" stroke="#e4fffb" fill="none" strokeWidth="1.500" /></svg>
        <TitleText>AutoCAD 2007 - [E:\辅导用图\2CAD课后配套习题\二维课后习题解答.dwg]</TitleText>
      </TitleBar>
      <MenuBar>
        <MenuIcon>
          <svg width="14" height="15" viewBox="0 0 14 15"><path d="M1 1h8l4 4v7H1z" fill="#2f62b0" /><path d="M0 8l5-3 8 5v4H1z" fill="#f4c832" /><path d="M3 3h5l2 3" stroke="#fff" fill="none" /></svg>
        </MenuIcon>
        {menus.map(([a, k, b]) => <MenuItem key={a + k}>{a}<u>{k}</u>{b}</MenuItem>)}
      </MenuBar>
      <ToolbarLine>
        <Bar><Grip $start $w={7} /><Tools list={standard} sep={8} /></Bar>
        <Bar><Grip /><Tools list={ucsTools} /></Bar>
        <Bar><Grip /><Tools list={['orbit', 'freeOrbit', 'contOrbit']} /></Bar>
        <Bar><Grip /><Tools list={['union']} /></Bar>
      </ToolbarLine>
      <ToolbarLine>
        <Bar>
          <Grip $start $w={8} /><Tools list={dims} />
          <Select label="标注样式" value="ISO-25" $w={90} arrowBg="#fff" />
          <Tools list={['dimStyle']} w={21} />
        </Bar>
        <Bar>
          <Grip /><Tools list={['layers']} w={21} />
          <Select label="图层" value="0" $w={268} arrowBg="#fff" $pad={3}>
            {['bulb', 'sun', 'sunVp', 'lock', 'square'].map(n => <Icon key={n} name={n} size={n === 'square' ? 12 : 15} />)}
          </Select>
          <Tools list={['layerPrev', 'layerState']} w={21} />
        </Bar>
        <Bar>
          <Grip />
          <Select label="颜色" value="红" $w={134} arrowBg="#fff" $fs={11} $pad={3}><Swatch $c="#f00" /></Select>
          <Sep />
          <Select label="线型" value="" $w={134} />
        </Bar>
      </ToolbarLine>
      <Workspace>
        <Palettes>
          <Palette $clip $h={388}><PaletteGrip /><PaletteTools $clip>
            {draw.map(n => <Tool key={n} aria-label={n}><Icon name={n} size={14} /></Tool>)}
          </PaletteTools></Palette>
          <Palette $h={348}><PaletteGrip /><PaletteTools>
            {modify.map(n => <Tool key={n} aria-label={n}><Icon name={n} size={15} /></Tool>)}
          </PaletteTools></Palette>
        </Palettes>
        <Drawing>
          <Canvas>
            <Model />
            <UcsIcon width="90" height="88" viewBox="0 0 90 88" fill="none" stroke="#ccc">
              <path d="M5.500 72.500h10v10h-10zM10.500 72V33M16 77.500h39M10.500 21.500l4 11h-8zM66 77.500l-11-4v8z" />
              <path d="M7.500 4l5 6 5-6M12.500 10v6M75 72l9 11M84 72l-9 11" />
            </UcsIcon>
            <TextFormat />
            <Tooltip role="tooltip">堆叠</Tooltip>
            <Layer>
              <g transform="translate(-44 -90)" fill="none">
                <path d="M508.500 190h28v31.500h-28zM349 280.500h204.500v61H349z" stroke="#00f51c" strokeWidth="3" />
                <path d="M527 219l10 16-3 1 7 42-13-40-5 1z" fill="#f00" />
              </g>
            </Layer>
          </Canvas>
          <TabStrip>
            {['first', 'prev', 'next', 'last'].map(n => <NavButton key={n} aria-label={n}><Icon name={n} size={12} /></NavButton>)}
            {['模型', '布局1', '布局2'].map((t, i) => (
              <Tab key={t} $on={i === 0}>
                <svg width="40" height="13" viewBox="0 0 40 13"><path d="M0 0l5 12.500h28L38 0" fill={i === 0 ? '#000' : '#f4f4f4'} stroke="#222" /></svg>
                <span>{t}</span>
              </Tab>
            ))}
          </TabStrip>
        </Drawing>
      </Workspace>
      <CommandArea>
        <Grip $start $w={10} />
        <CommandLines>
          <CommandLine>命令已完全放弃。</CommandLine>
          <CommandLine $last>选择注释对象或 <CommandKey>[</CommandKey>放弃<CommandKey>(U)]:</CommandKey></CommandLine>
        </CommandLines>
      </CommandArea>
      <StatusBar>
        <Coords>5729.4242, -12282.9427, 0.0000</Coords>
        {toggles.map(([t, on]) => <Toggle key={t} $on={on} $mono={/[A-Z]/.test(t)} aria-pressed={!!on}>{t}</Toggle>)}
        <Ime>
          <Icon name="sogou" /><span>英</span>
          {['moon', 'comma', 'keyboard', 'person', 'shirt', 'wrench'].map(n => <Icon key={n} name={n} size={14} />)}
        </Ime>
      </StatusBar>
      <Watermark>
        <svg width="188" height="88" viewBox="0 0 188 88" fill="#fff" stroke="#bbb">
          <g stroke="none" fill="#f4f4f4">
            <ellipse cx="83" cy="11" rx="6" ry="9" /><ellipse cx="99" cy="12" rx="6" ry="9" transform="rotate(10 99 12)" />
            <ellipse cx="70" cy="23" rx="6" ry="9" transform="rotate(-10 70 23)" /><ellipse cx="109" cy="26" rx="6" ry="9" transform="rotate(10 109 26)" />
          </g>
          <path d="M89 26q8 0 12 10 12 9 8 17-5 7-20 5-15 2-20-5-4-8 8-17 4-10 12-10z" />
          <g fontFamily="Liberation Sans, sans-serif" fontWeight="700">
            <text x="3" y="56" fontSize="38">Bai</text>
            <text x="73" y="53" fontSize="26">du</text>
          </g>
          <text x="118" y="54" fontSize="30" fontWeight="700" fontFamily="Noto Sans CJK SC, sans-serif">经验</text>
          <text x="5" y="80" fontSize="22" fontFamily="Liberation Sans, sans-serif">jingyan.baidu.com</text>
        </svg>
      </Watermark>
    </Shell>
  );
}
